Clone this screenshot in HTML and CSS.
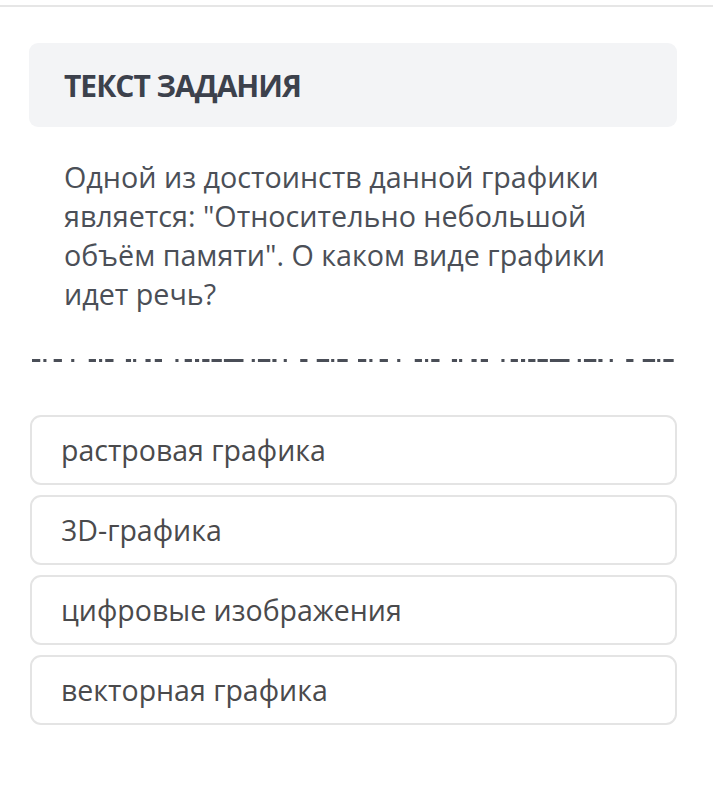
FILE: index.html
```html
<!DOCTYPE html>
<html lang="ru">
<head>
<meta charset="utf-8">
<title>Текст задания</title>
<link rel="stylesheet" href="styles.css">
</head>
<body>
<div class="topbar"></div>
<main class="page">
  <section class="task-head">
    <h2 class="task-title">ТЕКСТ ЗАДАНИЯ</h2>
  </section>
  <p class="question">Одной из достоинств данной графики является: "Относительно небольшой объём памяти". О каком виде графики идет речь?</p>
  <div class="dashes">
    <svg width="652" height="3" viewBox="0 0 632 3" preserveAspectRatio="none">
      <defs>
        <g id="half" fill="#4a4e57">
          <rect x="0" y="0" width="8" height="3"/>
          <rect x="11" y="0" width="3" height="3"/>
          <rect x="21" y="0" width="8" height="3"/>
          <rect x="38" y="0" width="3" height="3"/>
          <rect x="55" y="0" width="7" height="3"/>
          <rect x="65" y="0" width="3" height="3"/>
          <rect x="71" y="0" width="8" height="3"/>
          <rect x="91" y="0" width="5" height="3"/>
          <rect x="98" y="0" width="3" height="3"/>
          <rect x="110" y="0" width="5" height="3"/>
          <rect x="119" y="0" width="7" height="3"/>
          <rect x="139" y="0" width="3" height="3"/>
          <rect x="148" y="0" width="7" height="3"/>
          <rect x="158" y="0" width="4" height="3"/>
          <rect x="165" y="0" width="7" height="3"/>
          <rect x="174" y="0" width="10" height="3"/>
          <rect x="186" y="0" width="19" height="3"/>
          <rect x="213" y="0" width="3" height="3"/>
          <rect x="219" y="0" width="12" height="3"/>
          <rect x="233" y="0" width="4" height="3"/>
          <rect x="244" y="0" width="3" height="3"/>
          <rect x="260" y="0" width="7" height="3"/>
          <rect x="276" y="0" width="12" height="3"/>
          <rect x="290" y="0" width="3" height="3"/>
          <rect x="296" y="0" width="10" height="3"/>
        </g>
      </defs>
      <use href="#half" x="0"/>
      <use href="#half" x="316"/>
    </svg>
  </div>
  <ul class="options">
    <li class="option">растровая графика</li>
    <li class="option">3D-графика</li>
    <li class="option">цифровые изображения</li>
    <li class="option">векторная графика</li>
  </ul>
</main>
</body>
</html>
```

FILE: styles.css
```css
html, body {
  margin: 0;
  padding: 0;
  background: #ffffff;
}

body {
  font-family: "Open Sans", "Noto Sans", sans-serif;
  color: #4a4e56;
}

.topbar {
  height: 5px;
  border-bottom: 2px solid #e6e6e6;
}

.page {
  padding: 36px 36px 0 29px;
}

.task-head {
  background: #f3f4f6;
  border-radius: 9px;
  height: 84px;
  display: flex;
  align-items: center;
  padding-left: 35px;
}

.task-title {
  margin: 0;
  font-size: 30px;
  font-weight: 700;
  color: #3c414c;
  letter-spacing: -1px;
}

.question {
  margin: 30px 0 0 35px;
  font-size: 28.7px;
  line-height: 39px;
  color: #4b4f57;
  max-width: 570px;
}

.dashes {
  margin-top: 43px;
  padding-left: 3px;
  height: 3px;
  line-height: 0;
}

.options {
  list-style: none;
  margin: 56px 0 0 1px;
  padding: 0;
  display: flex;
  flex-direction: column;
  gap: 10px;
}

.option {
  height: 66px;
  border: 2px solid #e4e4e4;
  border-radius: 11px;
  display: flex;
  align-items: center;
  padding-left: 29px;
  font-size: 28.5px;
  color: #4a4a4c;
}
```
